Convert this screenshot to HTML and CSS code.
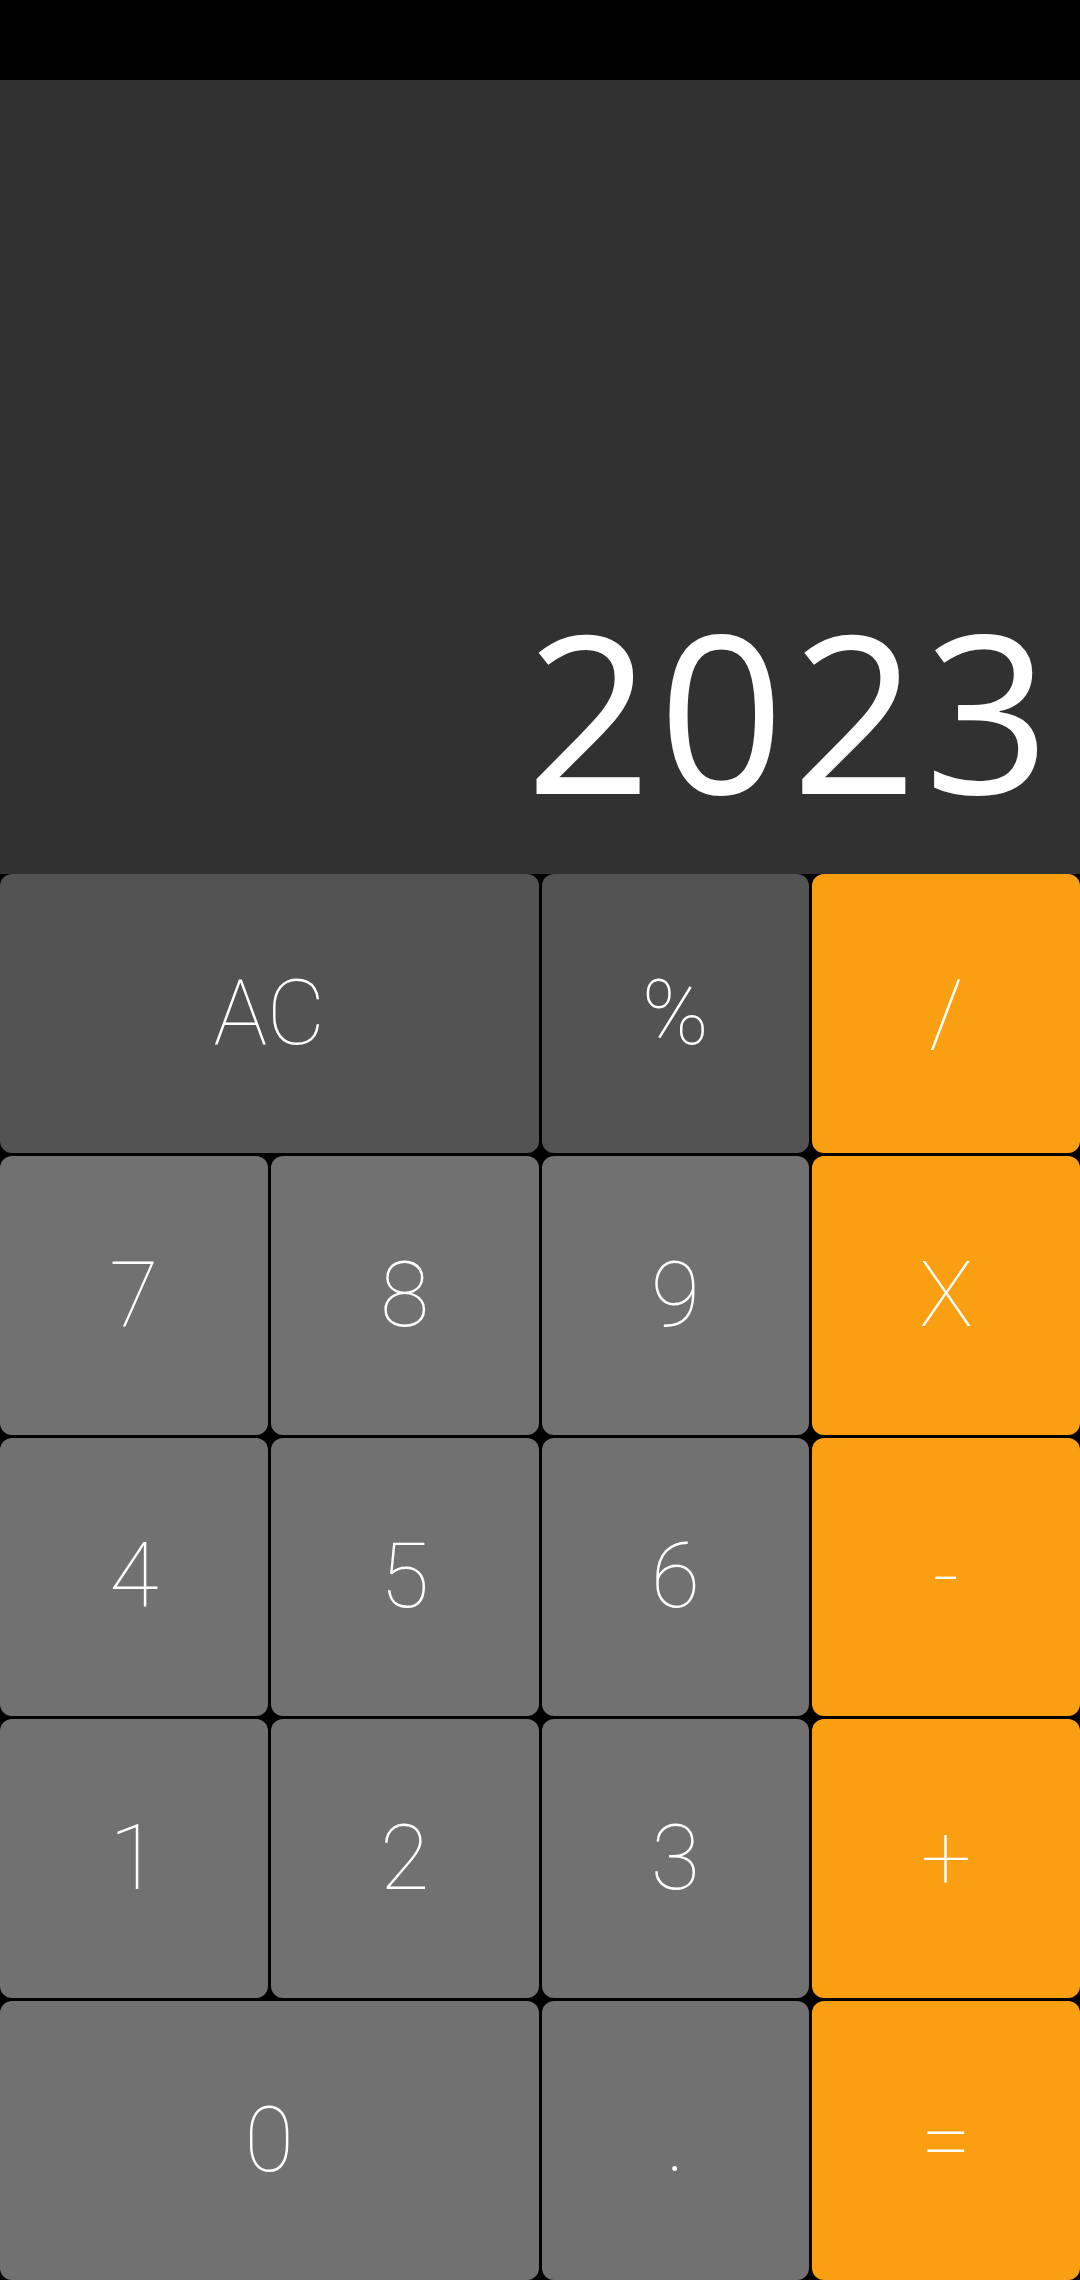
FILE: index.html
```html
<!DOCTYPE html>
<html>
<head>
<meta charset="utf-8">
<link rel="stylesheet" href="styles.css">
</head>
<body>
<div class="app">
  <div class="statusbar"></div>
  <div class="display"><span class="value">2023</span></div>
  <div class="keys">
    <div class="key dark span2">AC</div>
    <div class="key dark">%</div>
    <div class="key op">/</div>
    <div class="key">7</div>
    <div class="key">8</div>
    <div class="key">9</div>
    <div class="key op">X</div>
    <div class="key">4</div>
    <div class="key">5</div>
    <div class="key">6</div>
    <div class="key op">-</div>
    <div class="key">1</div>
    <div class="key">2</div>
    <div class="key">3</div>
    <div class="key op">+</div>
    <div class="key span2">0</div>
    <div class="key">.</div>
    <div class="key op">=</div>
  </div>
</div>
</body>
</html>
```
FILE: styles.css
```css
html, body {
  margin: 0;
  padding: 0;
  background: #000;
}
.app {
  width: 1080px;
  height: 2280px;
  display: flex;
  flex-direction: column;
  background: #000;
}
.statusbar {
  height: 80px;
  background: #000;
}
.display {
  height: 794px;
  background: #313131;
  display: flex;
  justify-content: flex-end;
  align-items: flex-end;
  padding: 0 23px 55px 0;
  box-sizing: border-box;
}
.value {
  font-family: "Open Sans", "Noto Sans", sans-serif;
  font-size: 220px;
  letter-spacing: 7px;
  line-height: 1;
  color: #fff;
}
.keys {
  height: 1406px;
  display: grid;
  grid-template-columns: repeat(4, 1fr);
  grid-template-rows: repeat(5, 1fr);
  gap: 3px;
  background: #000;
}
.key {
  background: #717171;
  border-radius: 12px;
  display: flex;
  align-items: center;
  justify-content: center;
  font-family: Roboto, "Noto Sans", sans-serif;
  font-weight: 100;
  font-size: 90px;
  color: #fff;
}
.key.dark {
  background: #535353;
}
.key.op {
  background: #fa9e12;
}
.span2 {
  grid-column: span 2;
}
```
